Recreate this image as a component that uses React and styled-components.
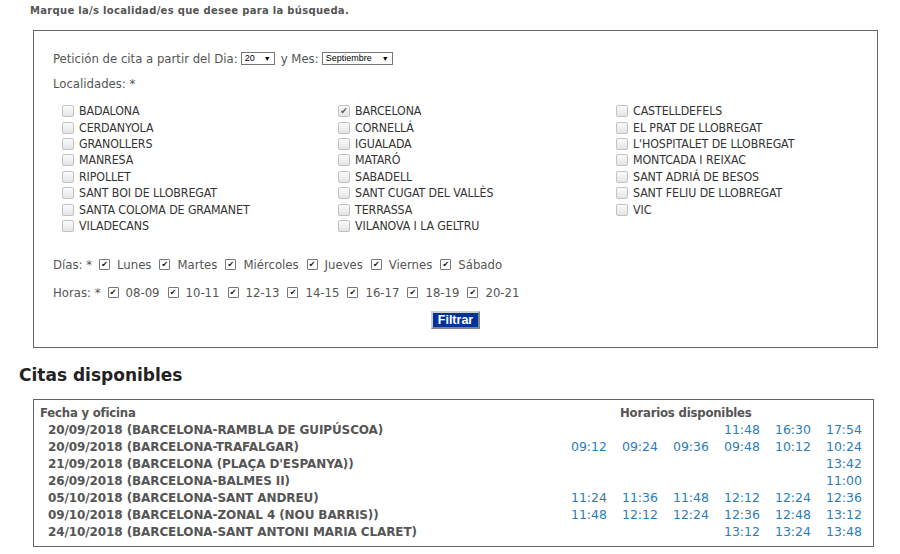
import React from "react";
import styled, { createGlobalStyle } from "styled-components";

const Global = createGlobalStyle`
  html, body { margin: 0; padding: 0; background: #fff; }
  body { font-family: "DejaVu Sans", Verdana, sans-serif; }
`;

const Page = styled.div`
  width: 900px;
  height: 554px;
  overflow: hidden;
  padding-top: 4px;
  box-sizing: border-box;
`;

const Intro = styled.div`
  margin-left: 30px;
  font-size: 10px;
  font-weight: bold;
  color: #555;
  letter-spacing: 0.3px;
  line-height: 14px;
`;

const FormBox = styled.div`
  margin: 12px 22px 0 33px;
  border: 1px solid #666;
  height: 318px;
  box-sizing: border-box;
  padding: 17px 19px 0;
  font-family: "DejaVu Sans Condensed", Tahoma, sans-serif;
  font-size: 13px;
  color: #555;
`;

const Line = styled.div`
  display: flex;
  align-items: center;
  height: 20px;
  margin-bottom: ${(p) => p.$gap || 0}px;
  white-space: nowrap;
`;

const Select = styled.span`
  display: inline-flex;
  align-items: center;
  justify-content: space-between;
  box-sizing: border-box;
  height: 13px;
  width: ${(p) => p.$w}px;
  margin: 0 6px 0 3px;
  border: 1px solid #767676;
  padding: 0 3px 0 3px;
  font-family: "Liberation Sans", Arial, sans-serif;
  font-size: 9px;
  color: #000;
  background: #fff;
  &::after {
    content: "▼";
    font-size: 7px;
  }
`;

const Towns = styled.div`
  display: grid;
  grid-template-columns: 276px 278px 1fr;
  grid-auto-rows: 16.43px;
  margin: 10px 0 0 9px;
`;

const Town = styled.label`
  display: flex;
  align-items: center;
  gap: 5px;
  font-size: 12.3px;
  color: #333;
  letter-spacing: -0.1px;
  white-space: nowrap;
`;

const Box = styled.span`
  display: inline-block;
  flex: none;
  box-sizing: border-box;
  width: ${(p) => p.$s}px;
  height: ${(p) => p.$s}px;
  border: 1px solid ${(p) => (p.$plain ? "#777" : "#c2c2c2")};
  border-radius: ${(p) => (p.$plain ? 1 : 2)}px;
  background: ${(p) =>
    p.$plain ? "#fff" : "linear-gradient(#fbfbfb, #e4e4e4)"};
  position: relative;
  &::after {
    content: ${(p) => (p.$on ? '"✔"' : "none")};
    position: absolute;
    left: 0;
    right: 0;
    top: -1px;
    text-align: center;
    font-family: "DejaVu Sans", sans-serif;
    font-size: ${(p) => p.$s - 3}px;
    line-height: ${(p) => p.$s}px;
    color: ${(p) => (p.$plain ? "#111" : "#555")};
  }
`;

const Checks = styled.div`
  display: flex;
  align-items: center;
  height: 20px;
  white-space: nowrap;
  margin-top: ${(p) => p.$top}px;
`;

const Tag = styled.span`
  margin-right: 7px;
`;

const Opt = styled.span`
  display: inline-flex;
  align-items: center;
  gap: 7px;
  margin-right: 8px;
`;

const ButtonRow = styled.div`
  display: flex;
  justify-content: center;
  margin-top: 9px;
`;

const Filter = styled.button`
  height: 18px;
  padding: 0 5px;
  border: 2px solid;
  border-color: #c9cdd6 #7e8390 #7e8390 #c9cdd6;
  background: #003399;
  color: #fff;
  font-family: "Liberation Sans", Arial, sans-serif;
  font-weight: bold;
  font-size: 12.5px;
  line-height: 12px;
`;

const Title = styled.h2`
  margin: 16px 0 0 19px;
  font-size: 17px;
  font-weight: bold;
  color: #222;
  line-height: 22px;
`;

const Results = styled.div`
  margin: 13px 26px 0 33px;
  border: 1px solid #666;
  height: 148px;
  box-sizing: border-box;
  padding: 4px 11px 0 6px;
  display: grid;
  grid-template-columns: 1fr repeat(6, 51px);
  grid-auto-rows: 17px;
  align-items: center;
  font-size: 12.5px;
`;

const Head = styled.div`
  font-weight: bold;
  color: #555;
  font-size: 11.7px;
  letter-spacing: -0.2px;
  grid-column: ${(p) => p.$span || "auto"};
  padding-left: ${(p) => p.$pad || 0}px;
  white-space: nowrap;
`;

const Office = styled.div`
  font-weight: bold;
  color: #555;
  font-size: 12px;
  padding-left: 8px;
  letter-spacing: -0.1px;
  white-space: nowrap;
`;

const Time = styled.div`
  text-align: right;
  color: #2b7db8;
`;

const towns = [
  "BADALONA", "BARCELONA", "CASTELLDEFELS",
  "CERDANYOLA", "CORNELLÁ", "EL PRAT DE LLOBREGAT",
  "GRANOLLERS", "IGUALADA", "L'HOSPITALET DE LLOBREGAT",
  "MANRESA", "MATARÓ", "MONTCADA I REIXAC",
  "RIPOLLET", "SABADELL", "SANT ADRIÁ DE BESOS",
  "SANT BOI DE LLOBREGAT", "SANT CUGAT DEL VALLÈS", "SANT FELIU DE LLOBREGAT",
  "SANTA COLOMA DE GRAMANET", "TERRASSA", "VIC",
  "VILADECANS", "VILANOVA I LA GELTRU",
];

const days = ["Lunes", "Martes", "Miércoles", "Jueves", "Viernes", "Sábado"];
const hours = ["08-09", "10-11", "12-13", "14-15", "16-17", "18-19", "20-21"];

const slots = [
  ["20/09/2018 (BARCELONA-RAMBLA DE GUIPÚSCOA)", ["", "", "", "11:48", "16:30", "17:54"]],
  ["20/09/2018 (BARCELONA-TRAFALGAR)", ["09:12", "09:24", "09:36", "09:48", "10:12", "10:24"]],
  ["21/09/2018 (BARCELONA (PLAÇA D'ESPANYA))", ["", "", "", "", "", "13:42"]],
  ["26/09/2018 (BARCELONA-BALMES II)", ["", "", "", "", "", "11:00"]],
  ["05/10/2018 (BARCELONA-SANT ANDREU)", ["11:24", "11:36", "11:48", "12:12", "12:24", "12:36"]],
  ["09/10/2018 (BARCELONA-ZONAL 4 (NOU BARRIS))", ["11:48", "12:12", "12:24", "12:36", "12:48", "13:12"]],
  ["24/10/2018 (BARCELONA-SANT ANTONI MARIA CLARET)", ["", "", "", "13:12", "13:24", "13:48"]],
];

export default function App() {
  return (
    <Page>
      <Global />
      <Intro>Marque la/s localidad/es que desee para la búsqueda.</Intro>
      <FormBox>
        <Line $gap={5}>
          Petición de cita a partir del Dia:
          <Select $w={34}>20</Select>y Mes:
          <Select $w={71}>Septiembre</Select>
        </Line>
        <Line>Localidades: *</Line>
        <Towns>
          {towns.map((t) => (
            <Town key={t}>
              <Box $s={12} $on={t === "BARCELONA"} />
              {t}
            </Town>
          ))}
        </Towns>
        <Checks $top={20}>
          <Tag>Días: *</Tag>
          {days.map((d) => (
            <Opt key={d}>
              <Box $s={11} $plain $on />
              {d}
            </Opt>
          ))}
        </Checks>
        <Checks $top={8}>
          <Tag>Horas: *</Tag>
          {hours.map((h) => (
            <Opt key={h}>
              <Box $s={11} $plain $on />
              {h}
            </Opt>
          ))}
        </Checks>
        <ButtonRow>
          <Filter>Filtrar</Filter>
        </ButtonRow>
      </FormBox>
      <Title>Citas disponibles</Title>
      <Results>
        <Head>Fecha y oficina</Head>
        <Head $span="2 / 8" $pad={64}>Horarios disponibles</Head>
        {slots.map(([office, times]) => (
          <React.Fragment key={office}>
            <Office>{office}</Office>
            {times.map((t, i) => (
              <Time key={i}>{t}</Time>
            ))}
          </React.Fragment>
        ))}
      </Results>
    </Page>
  );
}
